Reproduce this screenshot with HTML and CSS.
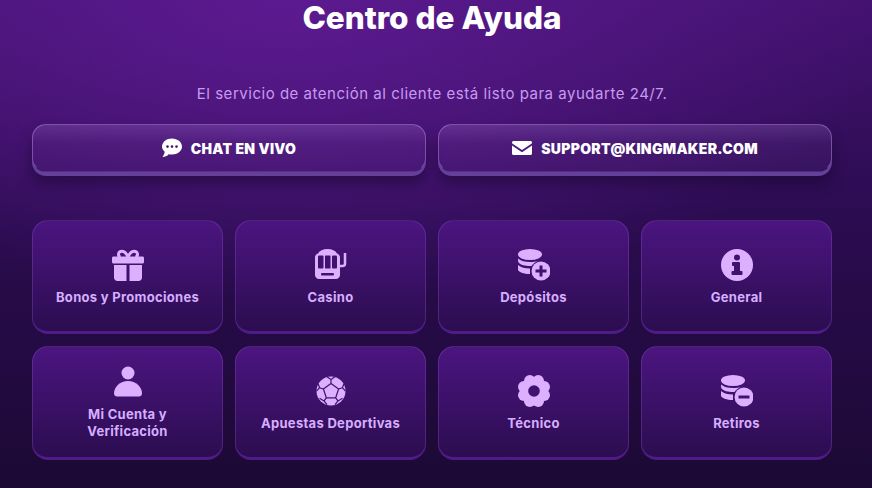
FILE: index.html
```html
<!DOCTYPE html>
<html lang="es">
<head>
  <meta charset="utf-8">
  <title>Centro de Ayuda</title>
  <link rel="stylesheet" href="styles.css">
</head>
<body>
  <main class="help">
    <h1 class="help-title">Centro de Ayuda</h1>
    <p class="help-sub">El servicio de atención al cliente está listo para ayudarte 24/7.</p>

    <div class="contact-row">
      <a class="contact-btn" href="#">
        <svg class="contact-icon" viewBox="0 0 20 20"><path d="M10 .5C4.500.5 0 4 0 8.600c0 2 1 3.800 2.700 5.100C2.500 15.500 1.500 17.500.5 19c2.500 0 4.700-1 6.200-2.800 1 .3 2.200.4 3.300.4 5.500 0 10-3.500 10-8S15.500.5 10 .5z"/><g class="cut"><circle cx="5.500" cy="8.600" r="1.300"/><circle cx="10" cy="8.600" r="1.300"/><circle cx="14.500" cy="8.600" r="1.300"/></g></svg>
        CHAT EN VIVO
      </a>
      <a class="contact-btn" href="#">
        <svg class="contact-icon" viewBox="0 0 20 20"><path d="M1.500 3h17C19.300 3 20 3.700 20 4.500c0 .5-.2.900-.6 1.200L10 12 .6 5.700C.2 5.400 0 5 0 4.500 0 3.700.7 3 1.500 3z"/><path d="M0 7.500l9.200 6.200c.5.300 1.100.3 1.600 0L20 7.500v8c0 .8-.7 1.500-1.500 1.500h-17C.7 17 0 16.300 0 15.500z"/></svg>
        SUPPORT@KINGMAKER.COM
      </a>
    </div>

    <section class="topics">
      <a class="topic" href="#">
        <svg class="topic-icon" viewBox="0 0 32 32"><path d="M1.500 7.500h29c.8 0 1.500.7 1.500 1.500v4c0 .8-.7 1.500-1.500 1.500h-29C.7 14.500 0 13.800 0 13V9c0-.8.7-1.500 1.500-1.500z"/><path d="M2 16h12.500v16H5.500C3.500 32 2 30.500 2 28.500zM17.500 16H30v12.500c0 2-1.500 3.500-3.500 3.500h-9z"/><path class="line" d="M16 8C14 3.500 11 1.500 8.500 2.500 6 3.500 5.500 7 8.500 8M16 8c2-4.500 5-6.500 7.500-5.500 2.500 1 3 4.500 0 5.500"/></svg>
        <span>Bonos y Promociones</span>
      </a>
      <a class="topic" href="#">
        <svg class="topic-icon" viewBox="0 0 32 32"><path d="M12.500 0C17 0 20.500 1.500 22 4.500c1.500.5 3 1.800 3 4V26c0 2.200-1.800 4-4 4H4c-2.200 0-4-1.800-4-4V8.500c0-2.200 1.500-3.500 3-4C4.500 1.500 8 0 12.500 0z"/><g class="cut"><rect x="3" y="6.500" width="5.500" height="13" rx="1"/><rect x="10" y="6.500" width="5.500" height="13" rx=".5"/><rect x="17" y="6.500" width="5" height="13" rx="1"/><rect x="6" y="24" width="13" height="2.500" rx="1"/></g><path class="line thin" d="M25 17h2.500c1.500 0 2.500-1 2.500-2.500V4"/></svg>
        <span>Casino</span>
      </a>
      <a class="topic" href="#">
        <svg class="topic-icon" viewBox="0 0 32 32"><use href="#coins"/><circle cx="23" cy="22" r="9.500"/><path class="cut" d="M21.500 16.500h3v4h4v3h-4v4h-3v-4h-4v-3h4z"/></svg>
        <span>Depósitos</span>
      </a>
      <a class="topic" href="#">
        <svg class="topic-icon" viewBox="0 0 32 32"><circle cx="16" cy="16" r="16"/><g class="cut"><circle cx="16" cy="8.500" r="3"/><path d="M12 13h6c.5 0 1 .5 1 1v8h1.500c.5 0 1 .5 1 1v2c0 .5-.5 1-1 1h-9c-.5 0-1-.5-1-1v-2c0-.5.5-1 1-1H13v-5h-1c-.5 0-1-.5-1-1v-2c0-.5.5-1 1-1z"/></g></svg>
        <span>General</span>
      </a>
      <a class="topic" href="#">
        <svg class="topic-icon" viewBox="0 0 32 32"><circle cx="16" cy="7" r="6.500"/><path d="M16 15c8 0 14 6 14 12.500 0 2-1.500 3-3 3H5c-1.500 0-3-1-3-3C2 21 8 15 16 15z"/></svg>
        <span>Mi Cuenta y<br>Verificación</span>
      </a>
      <a class="topic" href="#">
        <svg class="topic-icon" viewBox="0 0 32 32"><circle cx="16" cy="16" r="14.500"/><g class="seams"><path d="M16 8.500l7.600 5.500-2.900 8.800h-9.400L8.400 14zM16 8.500V4.500l-4-2.700M16 4.500l4-2.700M23.600 14l3.800-1.300 1.500-4M27.400 12.700l3.100 3.500M20.700 22.800l2.300 3.100 4.500-2.600M23 25.900l-3 3.800M11.300 22.800L9 25.900l-4.500-2.600M9 25.900l3 3.800M8.400 14l-3.800-1.300-1.500-4M4.600 12.700l-3.100 3.500"/></g></svg>
        <span>Apuestas Deportivas</span>
      </a>
      <a class="topic" href="#">
        <svg class="topic-icon" viewBox="0 0 32 32"><circle cx="16" cy="16" r="12"/><circle cx="26.200" cy="11.800" r="5.800"/><circle cx="26.200" cy="20.200" r="5.800"/><circle cx="5.800" cy="11.800" r="5.800"/><circle cx="5.800" cy="20.200" r="5.800"/><circle cx="11.800" cy="5.800" r="5.800"/><circle cx="20.200" cy="5.800" r="5.800"/><circle cx="11.800" cy="26.200" r="5.800"/><circle cx="20.200" cy="26.200" r="5.800"/><circle class="cut" cx="16" cy="16" r="5.800"/></svg>
        <span>Técnico</span>
      </a>
      <a class="topic" href="#">
        <svg class="topic-icon" viewBox="0 0 32 32"><use href="#coins"/><circle cx="23" cy="22" r="9.500"/><rect class="cut" x="17.500" y="20.500" width="11" height="3" rx=".5"/></svg>
        <span>Retiros</span>
      </a>
    </section>
  </main>

  <svg class="defs" aria-hidden="true">
    <symbol id="coins" viewBox="0 0 32 32">
      <ellipse cx="12" cy="5.500" rx="12" ry="5.500"/>
      <path d="M0 9.500C2.500 12 7 13 12 13c3.500 0 6.500-.5 9-1.500-3 1-6 3-7.500 5.500C8 17.200 2.500 16 .5 13.500 0 12 0 11 0 9.500z"/>
      <path d="M0 16c2.500 2.500 7 3.500 12 3.500v5.500C6 25 0 23 0 20.500z"/>
    </symbol>
  </svg>
</body>
</html>
```

FILE: styles.css
```css
* {
  box-sizing: border-box;
}
html, body {
  height: 100%;
}
body {
  margin: 0;
  overflow: hidden;
  font-family: Inter, "Noto Sans", sans-serif;
  background-color: #1f0a39;
  background-image: radial-gradient(ellipse 620px 300px at 33% 0, rgba(92, 26, 144, 1), rgba(92, 26, 144, 0)),
    linear-gradient(180deg, #431270 0, #2b0c50 45%, #1c0934 100%);
}
.help {
  padding: 0 40px 0 32px;
}
.help-title {
  margin: 0;
  height: 36px;
  font-size: 31.5px;
  line-height: 36px;
  font-weight: 800;
  color: #fff;
  text-align: center;
}
.help-sub {
  margin: 48px 0 0;
  height: 20px;
  font-size: 15px;
  line-height: 20px;
  letter-spacing: .52px;
  color: #c79af0;
  text-align: center;
}
.contact-row {
  display: grid;
  grid-template-columns: 1fr 1fr;
  gap: 12px;
  margin-top: 20px;
}
.contact-btn {
  display: flex;
  align-items: center;
  justify-content: center;
  gap: 9px;
  height: 48px;
  border: 1px solid rgba(190, 150, 235, .45);
  border-bottom-color: transparent;
  border-radius: 14px;
  background: linear-gradient(180deg, rgba(200, 160, 245, .2), rgba(190, 130, 245, .08) 40%, rgba(180, 110, 245, .06));
  box-shadow: 0 4px 0 #64409a, 0 11px 14px rgba(20, 5, 40, .5);
  font-size: 14px;
  letter-spacing: .3px;
  font-weight: 900;
  color: #fff;
  text-decoration: none;
}
.contact-icon {
  width: 20px;
  height: 20px;
  fill: #fff;
}
.contact-icon .cut {
  fill: #43186f;
}
.topics {
  display: grid;
  grid-template-columns: repeat(4, 1fr);
  gap: 12px;
  margin-top: 48px;
}
.topic {
  display: flex;
  flex-direction: column;
  align-items: center;
  justify-content: center;
  gap: 8px;
  height: 114px;
  padding: 2px 10px 0;
  border: 1px solid rgba(150, 90, 215, .3);
  border-bottom: 3px solid #4f1b88;
  border-radius: 16px;
  background: linear-gradient(180deg, #4b1580, #2c0d50);
  font-size: 13px;
  line-height: 17px;
  letter-spacing: .3px;
  font-weight: 700;
  color: #d6aeff;
  text-align: center;
  text-decoration: none;
}
.topic-icon {
  width: 32px;
  height: 32px;
  fill: #dcb0ff;
}
.topic-icon .cut {
  fill: #40126f;
}
.topic-icon .line {
  fill: none;
  stroke: #dcb0ff;
  stroke-width: 3;
}
.topic-icon .thin {
  stroke-width: 2.5;
}
.topic-icon .seams {
  fill: none;
  stroke: #40126f;
  stroke-width: 1.2;
}
.defs {
  display: none;
}
```
